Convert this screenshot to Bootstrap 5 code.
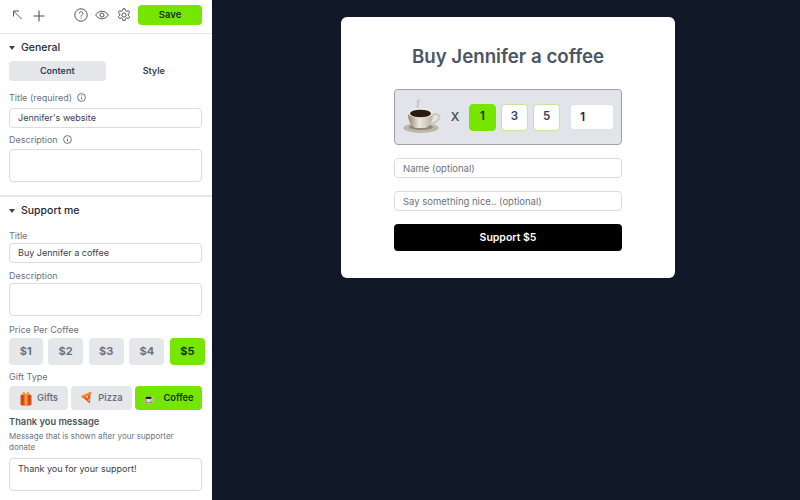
<!DOCTYPE html>
<html lang="en">
<head>
  <meta charset="UTF-8" />
  <meta name="viewport" content="width=device-width, initial-scale=1" />
  <title>Buy Jennifer a coffee</title>
  <link href="https://cdn.jsdelivr.net/npm/bootstrap@5.3.3/dist/css/bootstrap.min.css" rel="stylesheet" />
  <style>
    html, body { height: 100%; overflow: hidden; }
    body { background: #111827; font-family: Inter, "Liberation Sans", sans-serif; color: #1f2937; }
    .page { width: 800px; height: 500px; overflow: hidden; }
    .side { width: 212px; height: 500px; background: #fff; overflow: hidden; flex: none; }
    .topbar { height: 34px; padding: 5px 10px 0 12px; border-bottom: 1px solid #e5e7eb; }
    .topbar svg { display: block; color: #4b5563; }
    .ico-arrow { margin-top: 5px; }
    .ico-plus { margin: 5px auto 0 10px; }
    .ico-help { margin: 3px 0 0 0; }
    .ico-eye { margin: 4px 0 0 7px; }
    .ico-gear { margin: 3px 0 0 8px; }
    .save-btn { width: 64px; height: 20px; margin-left: 7px; padding: 0; border: 0; border-radius: 4px; background: #76e600; color: #14350a; font-size: 9.5px; font-weight: 600; }
    .sec { padding: 0 10px 0 9px; }
    .sec-head { font-size: 10.5px; font-weight: 500; line-height: 14px; color: #1f2937; }
    .caret { width: 0; height: 0; border-left: 3.5px solid transparent; border-right: 3.5px solid transparent; border-top: 4px solid #374151; margin-right: 6px; }
    .tabs button { flex: 1; height: 20px; padding: 0; border: 0; border-radius: 4px; background: transparent; font-size: 9px; font-weight: 600; color: #374151; }
    .tabs button.on { background: #e5e7eb; }
    .lbl { font-size: 9px; line-height: 12px; color: #6b7280; }
    .lbl svg { margin-left: 3px; vertical-align: -1px; }
    .fld { height: 20px; width: 100%; padding: 0 8px; border: 1px solid #d9dce1; border-radius: 4px; font-size: 9px; line-height: 18px; color: #374151; background: #fff; }
    .fld-tall { height: 33px; }
    .divide { border-top: 2px solid #e5e7eb; }
    .price-row { gap: 5.6px; margin-right: -3px; }
    .price { width: 35px; height: 27px; border: 0; padding: 0; border-radius: 4px; background: #e5e7eb; color: #6b7280; font-size: 11px; font-weight: 700; }
    .price.first { width: 33.5px; }
    .price.on, .gift.on { background: #76e600; color: #14350a; }
    .gift { height: 24px; border: 0; padding: 0; border-radius: 4px; background: #e5e7eb; color: #6b7280; font-size: 9.3px; font-weight: 600; }
    .msg-title { font-size: 9.3px; line-height: 12px; font-weight: 600; color: #4b5563; }
    .msg-sub { font-size: 8px; line-height: 11px; color: #6b7280; }
    .pay-card { width: 334px; height: 261px; margin: 17px 0 0 129px; padding: 28px 53px 0; background: #fff; border-radius: 6px; }
    .pay-card h1 { margin: 0; font-size: 18.7px; line-height: 24px; font-weight: 600; color: #4b5563; text-align: center; }
    .cup-box { height: 56px; margin-top: 20px; padding: 0 8px; background: #e2e4e9; border: 1px solid #9ca3af; border-radius: 4px; }
    .times { width: 28px; font-size: 12px; font-weight: 600; color: #4b5563; text-align: center; }
    .qty { width: 27px; height: 27px; margin-left: 5px; padding: 0; border: 1px solid #c5e59f; border-radius: 4px; background: #fff; color: #374151; font-size: 11.5px; font-weight: 600; }
    .qty.on { margin-left: 0; background: #76e600; border-color: #76e600; color: #14350a; }
    .qty-in { width: 42px; height: 24px; margin-left: 11px; padding-left: 9px; background: #fff; border-radius: 3px; font-size: 12px; line-height: 24px; font-weight: 600; color: #1f2937; }
    .pay-in { height: 20px; margin-top: 13px; padding: 0 8px; border: 1px solid #d9dce1; border-radius: 4px; font-size: 9.5px; line-height: 19px; color: #6b7280; }
    .pay-btn { width: 100%; height: 27px; margin-top: 13px; border: 0; padding: 1px 0 0; border-radius: 4px; background: #000; color: #fff; font-size: 10.5px; font-weight: 600; }
  </style>
</head>
<body>
  <div class="page d-flex">
    <div class="side">
      <!-- toolbar -->
      <div class="topbar d-flex align-items-start">
        <svg class="ico-arrow" width="11" height="10" viewBox="0 0 11 10" fill="none" stroke="currentColor" stroke-width="1"><path d="M1.500 6.500V1H7M1.500 1 9.500 9"/></svg>
        <svg class="ico-plus" width="12" height="12" viewBox="0 0 12 12" fill="none" stroke="currentColor" stroke-width="1.100"><path d="M6 .5v11M.5 6h11"/></svg>
        <svg class="ico-help" width="14" height="14" viewBox="0 0 14 14" fill="none" stroke="currentColor" stroke-width="1"><circle cx="7" cy="7" r="6.200"/><path d="M5.200 5.500c0-2.400 3.700-2.300 3.700 0 0 1.400-1.900 1.500-1.900 3"/><path d="M7 9.600v1"/></svg>
        <svg class="ico-eye" width="14" height="12" viewBox="0 0 14 12" fill="none" stroke="currentColor" stroke-width="1"><path d="M.7 6C3.700 1 10.300 1 13.300 6 10.300 11 3.700 11 .7 6Z"/><circle cx="7" cy="6" r="2"/></svg>
        <svg class="ico-gear" width="14" height="14" viewBox="0 0 14 14" fill="none" stroke="currentColor" stroke-width="1"><path d="M5.900 .8h2.200l.4 1.800 1.200.7 1.800-.6 1.100 1.900-1.400 1.300v1.400l1.400 1.300-1.100 1.900-1.800-.6-1.200.7-.4 1.800H5.900l-.4-1.800-1.200-.7-1.800.6L1.400 8.600l1.400-1.300V5.900L1.400 4.600l1.100-1.900 1.800.6 1.200-.7Z" stroke-linejoin="round"/><circle cx="7" cy="7" r="2.100"/></svg>
        <button class="save-btn">Save</button>
      </div>

      <!-- General -->
      <div class="sec">
        <div class="sec-head d-flex align-items-center" style="margin-top:7px;height:14px">
          <span class="caret"></span>General
        </div>
        <div class="tabs d-flex" style="margin-top:6px">
          <button class="on">Content</button>
          <button>Style</button>
        </div>
        <div class="lbl" style="margin-top:11px">Title (required) <svg width="9" height="9" viewBox="0 0 9 9" fill="none" stroke="#4b5563" stroke-width=".8"><circle cx="4.500" cy="4.500" r="3.900"/><path d="M4.500 4v2.400M4.500 2.400v.8"/></svg></div>
        <div class="fld" style="margin-top:4px">Jennifer's website</div>
        <div class="lbl" style="margin-top:6px">Description <svg width="9" height="9" viewBox="0 0 9 9" fill="none" stroke="#4b5563" stroke-width=".8"><circle cx="4.500" cy="4.500" r="3.900"/><path d="M4.500 4v2.400M4.500 2.400v.8"/></svg></div>
        <div class="fld fld-tall" style="margin-top:3px"></div>
      </div>
      <div class="divide" style="margin-top:13px"></div>

      <!-- Support me -->
      <div class="sec">
        <div class="sec-head d-flex align-items-center" style="margin-top:6px;height:16px">
          <span class="caret"></span>Support me
        </div>
        <div class="lbl" style="margin-top:11px">Title</div>
        <div class="fld" style="margin-top:1px">Buy Jennifer a coffee</div>
        <div class="lbl" style="margin-top:7px">Description</div>
        <div class="fld fld-tall" style="margin-top:1px"></div>
        <div class="lbl" style="margin-top:8px">Price Per Coffee</div>
        <div class="price-row d-flex" style="margin-top:2px">
          <button class="price first">$1</button>
          <button class="price">$2</button>
          <button class="price">$3</button>
          <button class="price">$4</button>
          <button class="price on">$5</button>
        </div>
        <div class="lbl" style="margin-top:6px">Gift Type</div>
        <div class="d-flex" style="margin-top:3px;gap:3px">
          <button class="gift d-flex align-items-center justify-content-center" style="width:59px">
            <svg class="me-1" width="14" height="15" viewBox="0 0 14 15"><rect x="1.500" y="3.500" width="11" height="11" rx="1.500" fill="#d9481c"/><rect x="5.500" y="3.500" width="3" height="11" fill="#e9a23b"/><path d="M7 4C4 4 2.500 2.500 4 1.200 5.500 .2 7 2 7 4c0-2 1.500-3.800 3-2.800C11.500 2.500 10 4 7 4Z" fill="#e9a23b"/></svg>Gifts
          </button>
          <button class="gift d-flex align-items-center justify-content-center" style="width:61px">
            <svg class="me-1" width="14" height="14" viewBox="0 0 14 14"><path d="M2 6 10.500 1.500 10 12.500Z" fill="#e8502a"/><path d="M1 5 10.500 .8 11.500 3 2.200 7.200Z" fill="#f08a2c"/><circle cx="7" cy="6" r="1.300" fill="#f6c04a"/><circle cx="9" cy="9" r="1" fill="#f6c04a"/></svg>Pizza
          </button>
          <button class="gift on d-flex align-items-center justify-content-center" style="width:67px">
            <svg class="me-2" width="12" height="11" viewBox="0 0 38 34"><use href="#cup"/></svg>Coffee
          </button>
        </div>
        <div class="msg-title" style="margin-top:6px">Thank you message</div>
        <div class="msg-sub" style="margin-top:3px">Message that is shown after your supporter<br>donate</div>
        <div class="fld" style="height:33px;margin-top:5px;padding-top:1px">Thank you for your support!</div>
      </div>
    </div>

    <!-- preview -->
    <div class="flex-grow-1">
      <div class="pay-card">
        <h1>Buy Jennifer a coffee</h1>
        <div class="cup-box d-flex align-items-center">
          <svg width="38" height="36" viewBox="0 0 38 36">
            <defs>
              <linearGradient id="cupg" x1="0" x2="1" y1="0" y2="0"><stop offset="0" stop-color="#8e8474"/><stop offset=".45" stop-color="#ece8df"/><stop offset="1" stop-color="#b9b1a2"/></linearGradient>
              <g id="cup">
                <ellipse cx="18" cy="29" rx="17.500" ry="5" fill="#bdb5a6"/>
                <ellipse cx="18" cy="28" rx="12" ry="3" fill="#8f8778"/>
                <path d="M28 16c8-3 10 2 7 5-2 2-5 4-9 4" fill="none" stroke="#cfc9bc" stroke-width="2"/>
                <path d="M5 14c0 8 3 14 8 15h9c5-1 8-7 8-15Z" fill="url(#cupg)"/>
                <ellipse cx="17.500" cy="14" rx="12.500" ry="5" fill="#efece5"/>
                <ellipse cx="17.500" cy="14.500" rx="10.500" ry="3.800" fill="#2a1a10"/>
              </g>
            </defs>
            <path d="M15 9c-2-2 1-3 0-5s1-3 2-3" fill="none" stroke="#c6c7ca" stroke-width="2"/>
            <use href="#cup"/>
          </svg>
          <div class="times">X</div>
          <button class="qty on">1</button>
          <button class="qty">3</button>
          <button class="qty">5</button>
          <div class="qty-in">1</div>
        </div>
        <div class="pay-in">Name (optional)</div>
        <div class="pay-in">Say something nice.. (optional)</div>
        <button class="pay-btn">Support $5</button>
      </div>
    </div>
  </div>
  <script src="https://cdn.jsdelivr.net/npm/bootstrap@5.3.3/dist/js/bootstrap.bundle.min.js"></script>
</body>
</html>
